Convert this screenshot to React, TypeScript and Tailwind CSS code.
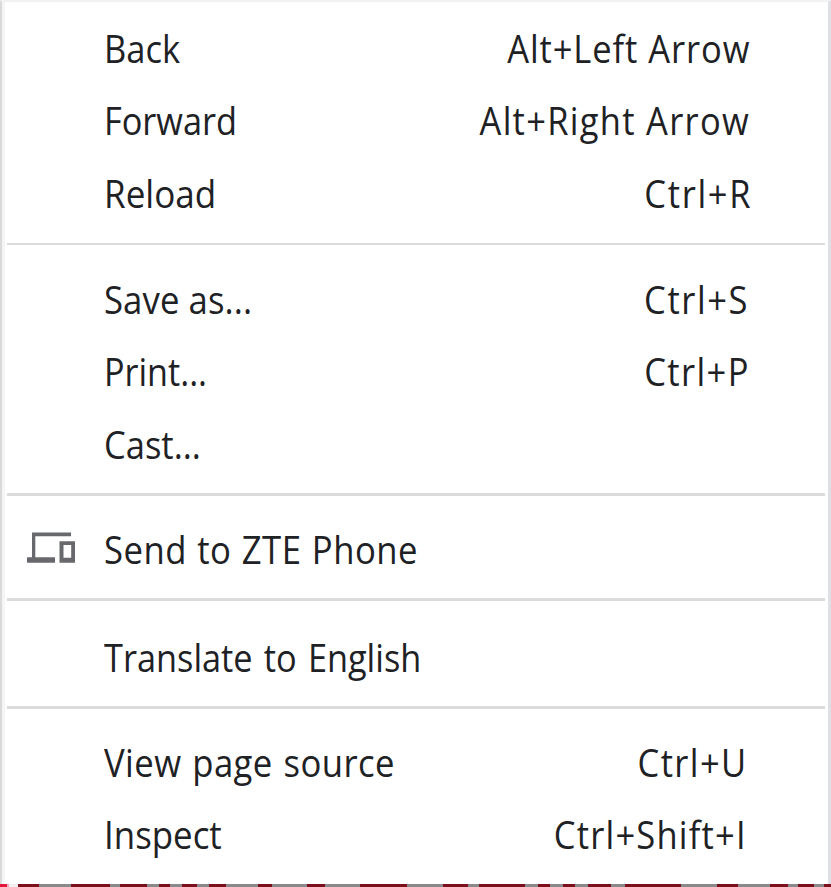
import React from 'react';

interface Item {
  label: string;
  labelClass: string;
  shortcut?: string;
  shortcutClass?: string;
  icon?: boolean;
}

interface Group {
  className: string;
  items: Item[];
}

const groups: Group[] = [
  {
    className: 'pt-[10px] pb-[13px]',
    items: [
      {
        label: 'Back',
        labelClass: 'scale-x-[0.92]',
        shortcut: 'Alt+Left Arrow',
        shortcutClass: 'mr-[75px] tracking-[1px]',
      },
      {
        label: 'Forward',
        labelClass: 'scale-x-[0.915]',
        shortcut: 'Alt+Right Arrow',
        shortcutClass: 'mr-[75px] tracking-[1.4px]',
      },
      {
        label: 'Reload',
        labelClass: 'scale-x-[0.935]',
        shortcut: 'Ctrl+R',
        shortcutClass: 'mr-[73px] tracking-[1.8px]',
      },
    ],
  },
  {
    className: 'border-t-2 pt-[18.5px] pb-[12.5px]',
    items: [
      {
        label: 'Save as...',
        labelClass: 'scale-x-[0.925] tracking-[0.1px]',
        shortcut: 'Ctrl+S',
        shortcutClass: 'mr-[76px] tracking-[1.7px]',
      },
      {
        label: 'Print...',
        labelClass: 'scale-x-[0.91]',
        shortcut: 'Ctrl+P',
        shortcutClass: 'mr-[75px] tracking-[1.5px]',
      },
      { label: 'Cast...', labelClass: 'scale-x-[0.92]' },
    ],
  },
  {
    className: 'border-t-[3px] pt-[17px] pb-[12px]',
    items: [
      { label: 'Send to ZTE Phone', labelClass: 'scale-x-[0.925] tracking-[0.5px] [word-spacing:1px]', icon: true },
    ],
  },
  {
    className: 'border-t-[3px] pt-[20.5px] pb-[12px]',
    items: [{ label: 'Translate to English', labelClass: 'scale-x-[0.915] [word-spacing:2.5px]' }],
  },
  {
    className: 'border-t-[3px] pt-[17.5px]',
    items: [
      {
        label: 'View page source',
        labelClass: 'scale-x-[0.925] tracking-[0.45px] [word-spacing:1.5px]',
        shortcut: 'Ctrl+U',
        shortcutClass: 'mr-[77px] tracking-[1.5px]',
      },
      {
        label: 'Inspect',
        labelClass: 'scale-x-[0.93]',
        shortcut: 'Ctrl+Shift+I',
        shortcutClass: 'mr-[78px] tracking-[1.3px]',
      },
    ],
  },
];

// x positions where the strip under the menu changes colour
const stops = [
  18, 39, 71, 110, 120, 147, 159, 170, 182, 197, 209, 226, 258, 272, 307, 325, 360, 407, 443, 468,
  479, 525, 538, 550, 563, 575, 588, 611, 625, 681, 717, 738, 770, 788, 798, 814, 824, 831,
];

const DevicesIcon: React.FC = () => (
  <svg className="mb-[3px]" width="48" height="32" viewBox="0 0 48 32" fill="#67696d">
    <path d="M5 0.5H44V4.2H8.3V25.3H28V30.8H0V25.3H5Z" />
    <path fillRule="evenodd" d="M32.5 9.2H48V30.8H32.5ZM36.5 13V25.7H44.2V13Z" />
  </svg>
);

const MenuItem: React.FC<{ item: Item }> = ({ item }) => (
  <div className="flex h-[72.5px] items-center text-[37.5px] leading-none whitespace-pre">
    <div className="w-[97px] shrink-0 pl-[20px]">{item.icon && <DevicesIcon />}</div>
    <span className={`inline-block origin-left ${item.labelClass}`}>{item.label}</span>
    {item.shortcut && (
      <span className={`ml-auto inline-block origin-right scale-x-[0.92] ${item.shortcutClass}`}>{item.shortcut}</span>
    )}
  </div>
);

const App: React.FC = () => {
  return (
    <div className="flex h-[887px] w-[831px] flex-col overflow-hidden bg-white font-['Open_Sans',sans-serif] text-[#202124]">
      <div className="h-[884px] border-t-2 border-r-[3px] border-l-2 border-t-[#f2f2f3] border-r-[#dfe0e6] border-l-[#dadadc]">
        <div className="h-full border-l-[3px] border-[#f5f5f6] pr-[3px] pl-[2px]">
          {groups.map((group, i) => (
            <div key={i} className={`border-[#dadbdd] ${group.className}`}>
              {group.items.map((item) => (
                <MenuItem key={item.label} item={item} />
              ))}
            </div>
          ))}
        </div>
      </div>
      <div className="flex h-[3px]">
        <div className="w-[7px] bg-[#e3183b]" />
        <div className="w-[2px] bg-[#efa9c4]" />
        <div className="w-[9px] bg-[#f3eef0]" />
        {stops.slice(1).map((stop, i) => (
          <div
            key={stop}
            className={i % 2 === 0 ? 'bg-[#7d0f1c]' : 'bg-[#8b8a8b]'}
            style={{ width: stop - stops[i] }}
          />
        ))}
      </div>
    </div>
  );
};

export default App;
